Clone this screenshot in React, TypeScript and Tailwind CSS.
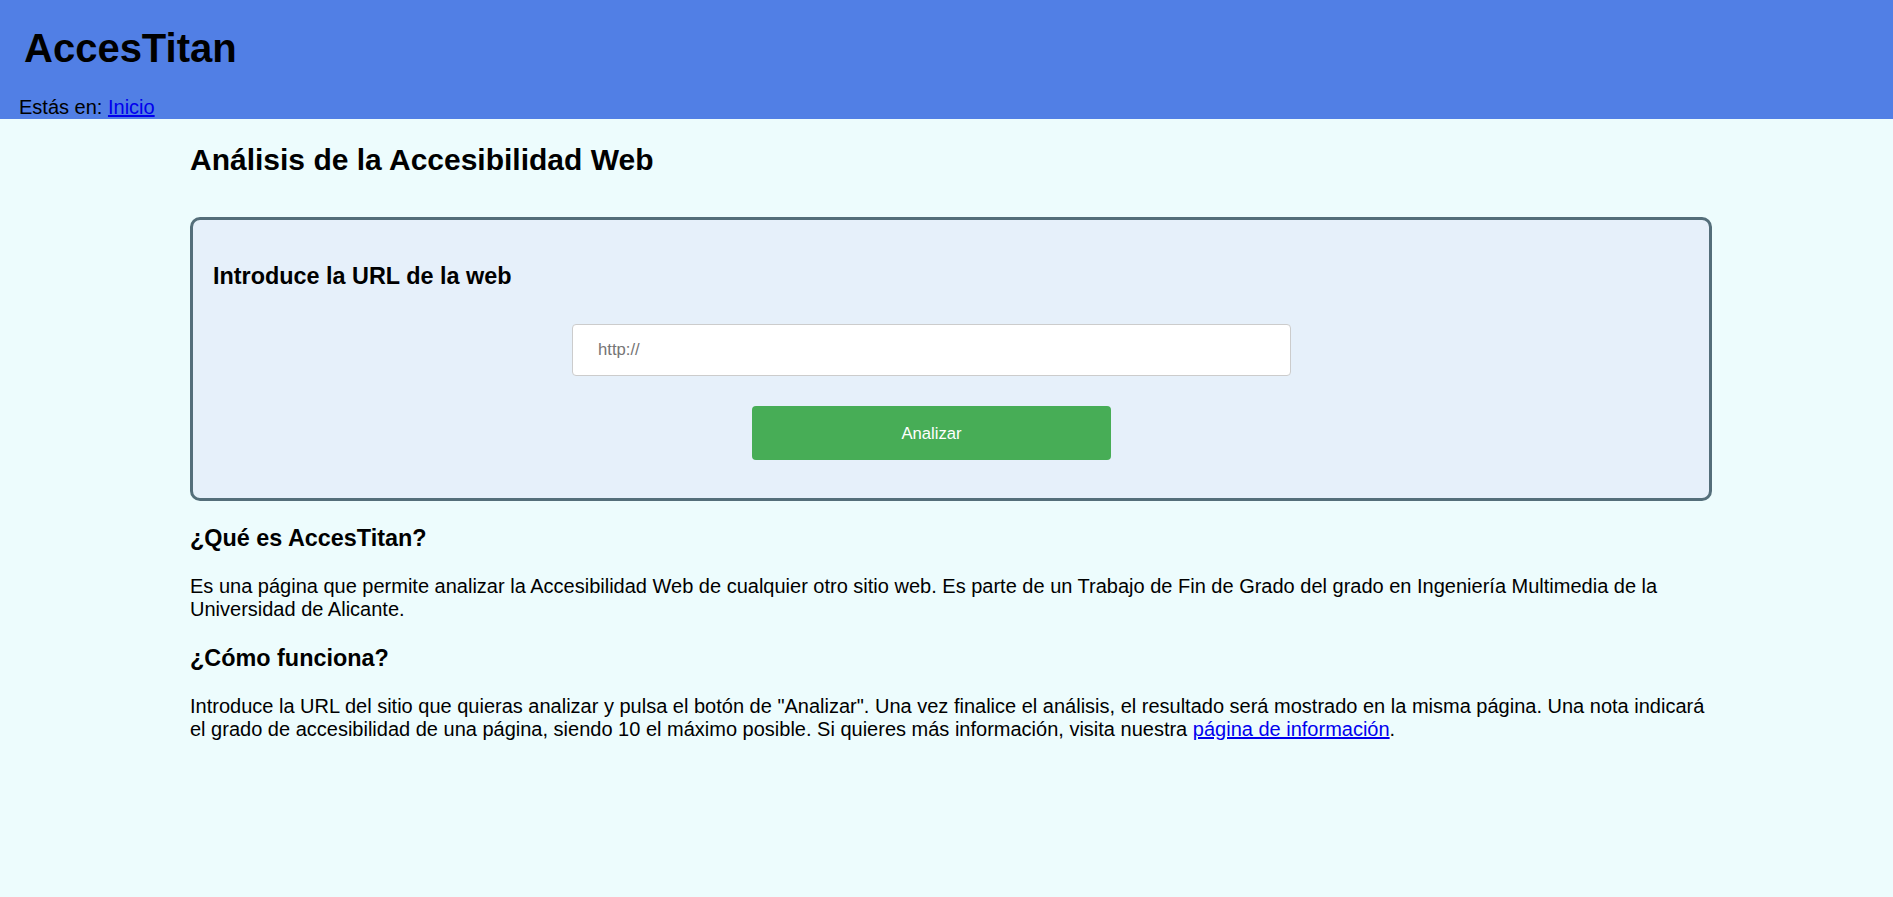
import React from "react";

// ── Page Component ──────────────────────────────────────────────────────
export default function App() {
    return (
        <div className="min-h-screen w-full bg-[#EDFCFD] text-black font-['Liberation_Sans',Arial,sans-serif]">
            {/* ── Header ─────────────────────────────────────────── */}
            <header className="bg-[#517FE5] pl-[19px] h-[119px]">
                <h1 className="ml-[5px] pt-[25px] mb-[25px] text-[40px] leading-[46px] font-bold">
                    AccesTitan
                </h1>
                <p className="text-[20px] leading-[23px]">
                    Estás en:{" "}
                    <a href="#" className="text-[#0000EE] underline">
                        Inicio
                    </a>
                </p>
            </header>

            {/* ── Main ───────────────────────────────────────────── */}
            <main className="ml-[190px] w-[1522px] pt-[24px] pb-[40px]">
                <h2 className="text-[30px] leading-[34.5px] font-bold">
                    Análisis de la Accesibilidad Web
                </h2>

                {/* Form box */}
                <form
                    className="mt-[39.5px] bg-[#E6F0FA] border-[3px] border-[#546E7A] rounded-[10px] px-[20px] pt-[20px] pb-[38px]"
                    onSubmit={(e) => e.preventDefault()}
                >
                    <h3 className="mt-[23px] text-[23.4px] leading-[27px] font-bold">
                        Introduce la URL de la web
                    </h3>
                    <div className="pr-[39px] flex flex-col items-center">
                        <input
                            type="text"
                            placeholder="http://"
                            className="mt-[34px] w-[719px] h-[52px] bg-white border border-[#CCCCCC] rounded-[4px] pl-[25px] text-[16.67px] placeholder:text-[#757575] outline-none"
                        />
                        <button
                            type="submit"
                            className="mt-[30px] w-[359px] h-[54px] bg-[#47AD56] text-white text-[16.67px] rounded-[4px]"
                        >
                            Analizar
                        </button>
                    </div>
                </form>

                {/* Info sections */}
                <h3 className="mt-[24px] text-[23.4px] leading-[27px] font-bold">
                    ¿Qué es AccesTitan?
                </h3>
                <p className="mt-[23.4px] text-[20px] leading-[23px]">
                    Es una página que permite analizar la Accesibilidad Web de
                    cualquier otro sitio web. Es parte de un Trabajo de Fin de
                    Grado del grado en Ingeniería Multimedia de la Universidad de
                    Alicante.
                </p>

                <h3 className="mt-[23.4px] text-[23.4px] leading-[27px] font-bold">
                    ¿Cómo funciona?
                </h3>
                <p className="mt-[23.4px] text-[20px] leading-[23px]">
                    Introduce la URL del sitio que quieras analizar y pulsa el
                    botón de "Analizar". Una vez finalice el análisis, el
                    resultado será mostrado en la misma página. Una nota indicará
                    el grado de accesibilidad de una página, siendo 10 el máximo
                    posible. Si quieres más información, visita nuestra{" "}
                    <a href="#" className="text-[#0000EE] underline">
                        página de información
                    </a>
                    .
                </p>
            </main>
        </div>
    );
}
